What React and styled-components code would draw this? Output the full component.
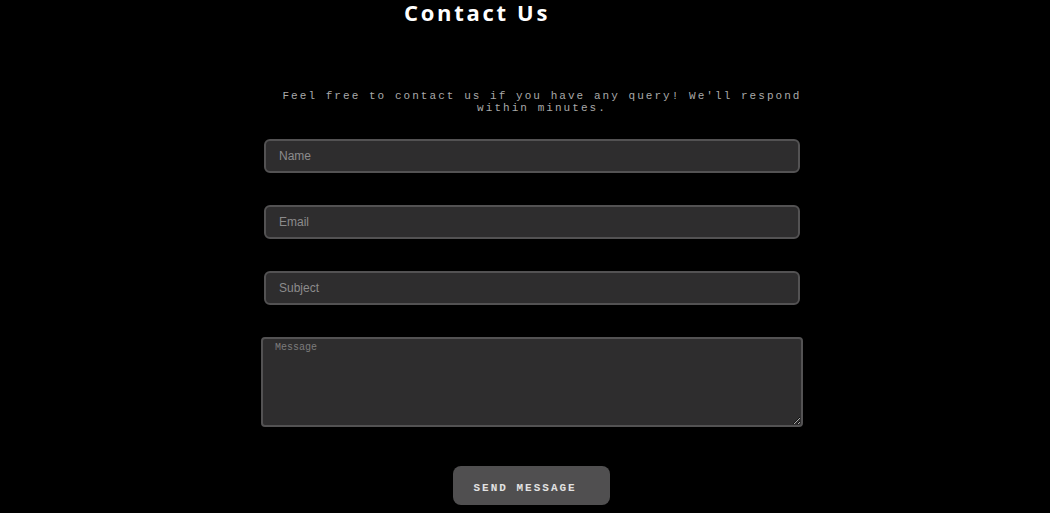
import React from "react";
import styled, { createGlobalStyle } from "styled-components";

const Global = createGlobalStyle`
  html, body { margin: 0; padding: 0; background: #000; }
  body { font-family: "Liberation Sans", Arial, sans-serif; }
`;

const Page = styled.div`
  width: 1050px;
  height: 513px;
  overflow: hidden;
  background: #000;
  padding-top: 1px;
  box-sizing: border-box;
`;

const Title = styled.h1`
  margin: 0;
  width: 954px;
  text-align: center;
  font-family: "Open Sans", sans-serif;
  font-weight: 700;
  font-size: 22px;
  line-height: 22px;
  letter-spacing: 2.7px;
  color: #fff;
`;

const Intro = styled.p`
  margin: 67px 0 0 270px;
  width: 544px;
  text-align: center;
  font-family: "Liberation Mono", "Courier New", monospace;
  font-size: 11px;
  line-height: 12px;
  letter-spacing: 2.05px;
  color: #a9a9a9;
`;

const Form = styled.form`
  margin: 25px 0 0 264px;
  width: 536px;
  display: flex;
  flex-direction: column;
  align-items: center;
`;

const Field = styled.input`
  box-sizing: border-box;
  width: 536px;
  height: 34px;
  margin-bottom: 32px;
  padding: 0 13px;
  background: #2e2d2e;
  border: 2px solid #535253;
  border-radius: 6px;
  color: #ddd;
  font-family: "Liberation Sans", Arial, sans-serif;
  font-size: 12px;
  outline: none;
  &::placeholder { color: #8c8b8c; }
`;

const Message = styled.textarea`
  box-sizing: border-box;
  width: 542px;
  height: 90px;
  margin: 0 0 39px;
  padding: 3px 12px;
  background: #2e2d2e;
  border: 2px solid #535253;
  border-radius: 4px;
  color: #ddd;
  font-family: "Liberation Mono", "Courier New", monospace;
  font-size: 10px;
  outline: none;
  &::placeholder { color: #7c7b7c; }
`;

const Send = styled.button`
  box-sizing: border-box;
  width: 157px;
  height: 39px;
  margin-right: 2px;
  padding: 5px 0 0 21px;
  text-align: left;
  background: #504f50;
  border: none;
  border-radius: 8px;
  color: #e2e2e2;
  font-family: "Liberation Mono", "Courier New", monospace;
  font-weight: 700;
  font-size: 11px;
  letter-spacing: 2px;
  cursor: pointer;
`;

export default function App() {
  return (
    <Page>
      <Global />
      <Title>Contact Us</Title>
      <Intro>
        Feel free to contact us if you have any query! We'll respond within minutes.
      </Intro>
      <Form onSubmit={(e) => e.preventDefault()}>
        <Field type="text" placeholder="Name" />
        <Field type="email" placeholder="Email" />
        <Field type="text" placeholder="Subject" />
        <Message placeholder="Message" />
        <Send type="submit">SEND MESSAGE</Send>
      </Form>
    </Page>
  );
}
